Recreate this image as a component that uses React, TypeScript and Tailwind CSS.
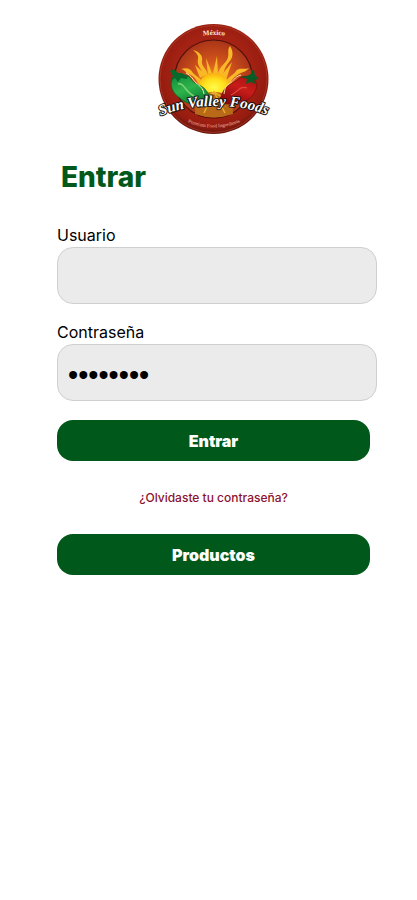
import { useState } from 'react'
import type { FormEvent } from 'react'

function Logo() {
  return (
    <svg viewBox="3 4 121 120" className="block h-[120px] w-[121px]" role="img" aria-label="Sun Valley Foods">
      <defs>
        <radialGradient id="rim" cx="50%" cy="45%" r="55%">
          <stop offset="0.65" stopColor="#a32213" />
          <stop offset="0.88" stopColor="#961c10" />
          <stop offset="1" stopColor="#64150d" />
        </radialGradient>
        <radialGradient id="sky" cx="50%" cy="52%" r="52%">
          <stop offset="0" stopColor="#f0961c" />
          <stop offset="0.45" stopColor="#d4571c" />
          <stop offset="1" stopColor="#a93418" />
        </radialGradient>
        <radialGradient id="sun" cx="50%" cy="60%" r="55%">
          <stop offset="0" stopColor="#fffb4a" />
          <stop offset="0.6" stopColor="#ffe11c" />
          <stop offset="1" stopColor="#fcb414" />
        </radialGradient>
        <linearGradient id="green" x1="0" y1="0" x2="0.6" y2="1">
          <stop offset="0" stopColor="#0e8a3a" />
          <stop offset="0.5" stopColor="#2fb34c" />
          <stop offset="1" stopColor="#06752e" />
        </linearGradient>
        <linearGradient id="red" x1="1" y1="0" x2="0.4" y2="1">
          <stop offset="0" stopColor="#a90f12" />
          <stop offset="0.5" stopColor="#c81c1a" />
          <stop offset="1" stopColor="#8b0b0d" />
        </linearGradient>
        <path id="nameArc" d="M8 102 Q24 95 44 92 Q63 90 86 92 Q106 95 124 103" />
        <path id="topArc" d="M40 23 Q63 17 88 23" />
        <path id="bottomArc" d="M27 102 Q63 123 101 102" />
      </defs>

      <circle cx="63.5" cy="64" r="55" fill="url(#rim)" />
      <circle cx="63.5" cy="64" r="53.5" fill="none" stroke="#b8452f" strokeWidth="0.6" />
      <circle cx="63.5" cy="64" r="39" fill="url(#sky)" stroke="#4f100b" strokeWidth="1.2" />

      {/* Sun rays */}
      <g fill="#f9b827">
        <path d="M53 61C54 56 46 51 48 44C49 40 46 38 43 35C50 37 53 41 52 46C51 51 57 54 58 60Z" />
        <path d="M68 60C68 52 77 48 78 42C79 38 77 35 80 31C84 37 83 43 79 47C75 52 74 55 73 62Z" />
        <path d="M48 69C46 63 43 61 39 59C35 58 36 55 31 54C37 52 41 54 43 58C46 61 49 62 52 66Z" />
        <path d="M76 67C78 61 83 61 86 56C89 52 93 55 99 53C96 57 92 57 89 59C84 62 82 64 80 69Z" />
        <path d="M58 59L56 43L62 58Z" />
        <path d="M63 58L67 41L68 59Z" />
        <path d="M50 63L45 50L56 60Z" />
        <path d="M71 61L82 47L76 65Z" />
      </g>
      <path d="M48 79C46 66 54 58 64 58C74 58 82 66 80 79Q64 85 48 79Z" fill="url(#sun)" />
      <path d="M46 82Q64 72 82 82L83 99Q64 106 45 99Z" fill="#b96a18" />
      <path d="M49 87L64 77L80 87M54 98L64 77L75 98" fill="none" stroke="#e9ad28" strokeWidth="1.5" />

      {/* Peppers */}
      <path d="M22 65C26 58 37 58 41 64C44 69 49 69 54 73C58 77 60 82 64 88C54 93 38 90 31 84C24 79 19 72 22 65Z" fill="url(#green)" stroke="#075a26" strokeWidth="0.7" />
      <path d="M28 69C34 67 35 77 44 81" fill="none" stroke="#7bd475" strokeWidth="1.5" />
      <path d="M20 66L23 61L20 56L24 54L28 58L32 58L36 61L38 60L37 64L31 63L28 67L25 63Z" fill="#066a2d" />
      <path d="M36 58C42 61 43 65 46 68C50 71 53 73 54 79" fill="none" stroke="#ffe5b0" strokeWidth="1" />
      <path d="M106 67C102 59 92 60 87 65C82 69 78 69 74 75C71 80 70 84 69 88C84 91 97 88 103 80C106 75 108 71 106 67Z" fill="url(#red)" stroke="#760b0b" strokeWidth="0.7" />
      <path d="M97 73C90 70 87 78 81 80" fill="none" stroke="#e04a38" strokeWidth="1.2" />
      <path d="M90 62L97 61L101 59L101 55L104 55L105 60L109 64L104 65L106 69L100 67L96 69L97 64Z" fill="#0a5b26" />
      <path d="M91 60C84 62 84 66 79 69C75 71 75 74 74 79" fill="none" stroke="#ffe0a4" strokeWidth="1" />

      <g fontFamily="'Liberation Serif', serif" textAnchor="middle">
        <text fontSize="7" fontWeight="bold" fill="#ffe8dc">
          <textPath href="#topArc" startOffset="50%">México</textPath>
        </text>
        <text fontSize="5" fill="#f1b6a0">
          <textPath href="#bottomArc" startOffset="50%">Premium Food Ingredients</textPath>
        </text>
        <text fontSize="15" fontWeight="bold" fontStyle="italic" fill="#fff" stroke="#1c1210" strokeWidth="2" strokeLinejoin="round" paintOrder="stroke">
          <textPath href="#nameArc" startOffset="48%">Sun Valley Foods</textPath>
        </text>
      </g>
    </svg>
  )
}

type FieldProps = {
  id: string
  label: string
  type: string
  value: string
  onChange: (value: string) => void
}

function Field({ id, label, type, value, onChange }: FieldProps) {
  return (
    <div>
      <label htmlFor={id} className="block text-base leading-6 text-black">
        {label}
      </label>
      <input
        id={id}
        name={id}
        type={type}
        value={value}
        onChange={(e) => onChange(e.target.value)}
        className="block h-[57px] w-full rounded-2xl border border-[#cfcfcf] bg-[#ebebeb] px-2.5 pt-1.5 font-['Liberation_Sans',sans-serif] text-[29px] text-black focus:outline-none focus-visible:ring-2 focus-visible:ring-[#00591b]"
      />
    </div>
  )
}

export default function App() {
  const [user, setUser] = useState('')
  const [password, setPassword] = useState('password')

  const handleSubmit = (e: FormEvent) => {
    e.preventDefault()
  }

  return (
    <main className="min-h-screen bg-white pt-[19px] pr-10 pb-10 pl-[57px] font-['Inter',sans-serif]">
      <div className="mr-[7px] flex justify-center">
        <Logo />
      </div>
      <h1 className="mt-5 pl-1 text-[28px] leading-9 font-extrabold text-[#00591b]">Entrar</h1>

      <form onSubmit={handleSubmit} className="mt-7">
        <div className="space-y-4">
          <Field id="usuario" label="Usuario" type="text" value={user} onChange={setUser} />
          <Field id="contrasena" label="Contraseña" type="password" value={password} onChange={setPassword} />
        </div>

        <div className="mt-[19px] mr-[7px] flex flex-col">
          <button type="submit" className="h-[41px] rounded-2xl bg-[#00591b] text-base font-black text-white">
            Entrar
          </button>
          <a href="#recuperar" className="mt-[29px] mb-7 self-center text-xs leading-4 font-medium text-[#8c1230]">
            ¿Olvidaste tu contraseña?
          </a>
          <button type="button" className="h-[41px] rounded-2xl bg-[#00591b] text-base font-black text-white">
            Productos
          </button>
        </div>
      </form>
    </main>
  )
}
